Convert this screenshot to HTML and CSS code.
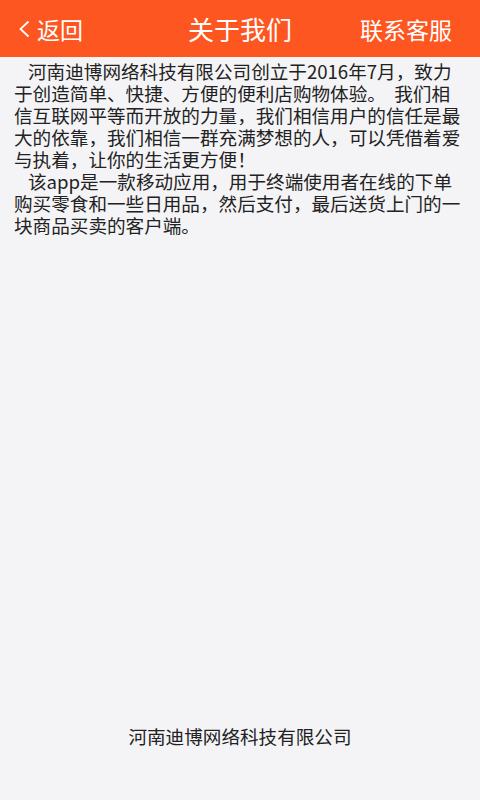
FILE: index.html
```html
<!DOCTYPE html>
<html lang="zh-CN">
<head>
<meta charset="utf-8">
<title>关于我们</title>
<link rel="stylesheet" href="styles.css">
</head>
<body>
<div class="page">
  <header class="topbar">
    <div class="back">
      <svg class="chev" width="12" height="18" viewBox="0 0 12 18"><polyline points="10.5,1.5 2.5,9 10.5,16.5" fill="none" stroke="#fff" stroke-width="1.8" stroke-linejoin="miter"/></svg>
      <span>返回</span>
    </div>
    <div class="title">关于我们</div>
    <div class="service">联系客服</div>
  </header>
  <main class="content">
    <p class="para">河南迪博网络科技有限公司创立于2016年7月，致力于创造简单、快捷、方便的便利店购物体验。&nbsp;&nbsp;我们相信互联网平等而开放的力量，我们相信用户的信任是最大的依靠，我们相信一群充满梦想的人，可以凭借着爱与执着，让你的生活更方便！</p>
    <p class="para">该app是一款移动应用，用于终端使用者在线的下单购买零食和一些日用品，然后支付，最后送货上门的一块商品买卖的客户端。</p>
  </main>
  <footer class="footer">河南迪博网络科技有限公司</footer>
</div>
</body>
</html>
```
FILE: styles.css
```css
html, body {
  margin: 0;
  padding: 0;
}
body {
  background: #f4f4f6;
  font-family: "Noto Sans CJK SC", "Noto Sans", sans-serif;
  color: #222;
}
.page {
  display: flex;
  flex-direction: column;
  min-height: 800px;
}
.topbar {
  height: 57px;
  background: #fe5621;
  color: #fff;
  display: flex;
  align-items: center;
  justify-content: space-between;
  padding: 0 28px 0 18px;
  position: relative;
}
.back {
  display: flex;
  align-items: center;
  font-size: 23px;
  gap: 7px;
}
.chev {
  display: block;
}
.title {
  position: absolute;
  left: 0;
  right: 0;
  text-align: center;
  font-size: 26px;
  pointer-events: none;
}
.service {
  font-size: 23px;
}
.content {
  padding: 3px 14px 0 14px;
}
.para {
  margin: 0;
  font-size: 18.6px;
  line-height: 22px;
  text-indent: 14px;
  color: #222;
}
.footer {
  margin-top: auto;
  text-align: center;
  font-size: 18.6px;
  line-height: 22px;
  padding-bottom: 53px;
  color: #222;
}
```
